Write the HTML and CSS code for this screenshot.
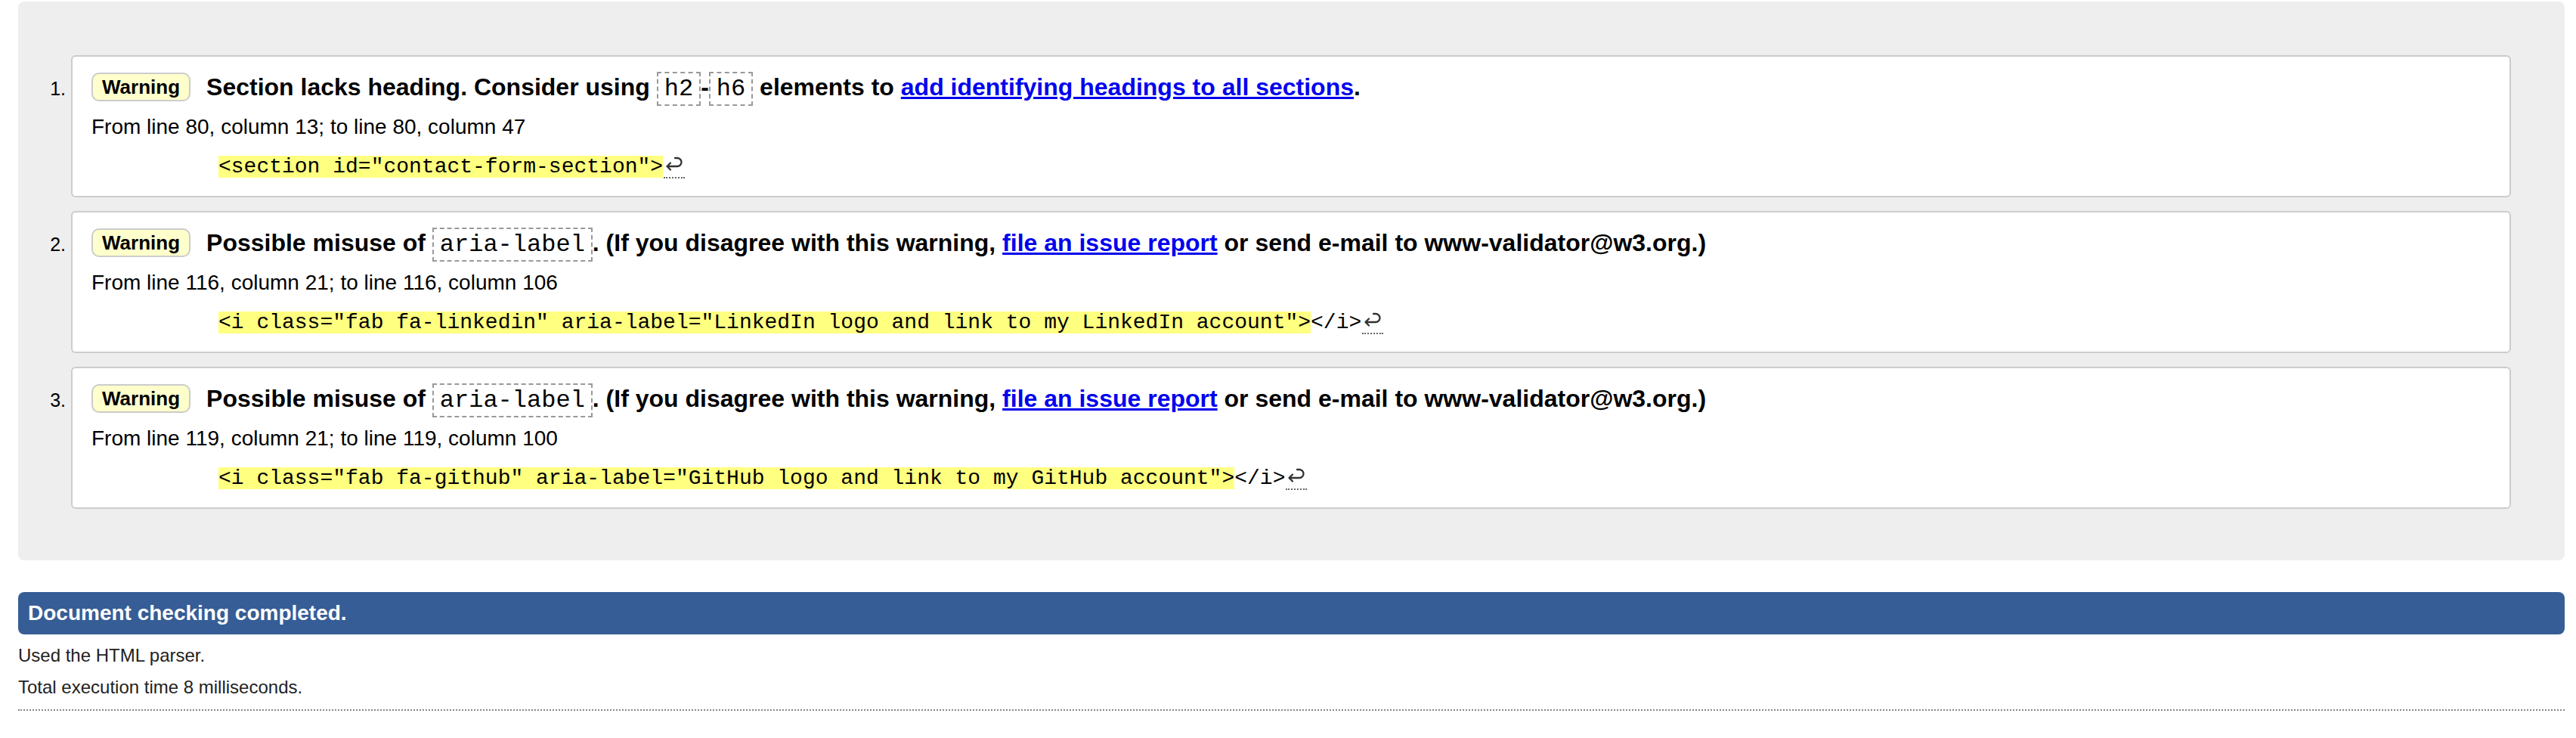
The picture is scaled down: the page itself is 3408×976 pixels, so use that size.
FILE: index.html
```html
<!DOCTYPE html>
<html lang="en">
<head>
<meta charset="utf-8">
<title>Nu Html Checker results</title>
<link rel="stylesheet" href="styles.css">
</head>
<body>
<div class="results">
  <ol class="messages">
    <li class="message">
      <p class="msg-head"><strong class="badge">Warning</strong><span>Section lacks heading. Consider using <code>h2</code>-<code>h6</code> elements to <a href="#">add identifying headings to all sections</a>.</span></p>
      <p class="location">From line 80, column 13; to line 80, column 47</p>
      <p class="extract"><b class="hl">&lt;section id="contact-form-section"&gt;</b><span class="lf" title="Line break"><svg viewBox="0 0 27 27" width="27" height="27" aria-hidden="true"><path d="M4.5 14 H18 A5.5 5.5 0 0 0 18 3 H15 M9 9.5 L4.5 14 L9 18.5"/></svg></span></p>
    </li>
    <li class="message">
      <p class="msg-head"><strong class="badge">Warning</strong><span>Possible misuse of <code>aria-label</code>. (If you disagree with this warning, <a href="#">file an issue report</a> or send e-mail to www-validator@w3.org.)</span></p>
      <p class="location">From line 116, column 21; to line 116, column 106</p>
      <p class="extract"><b class="hl">&lt;i class="fab fa-linkedin" aria-label="LinkedIn logo and link to my LinkedIn account"&gt;</b>&lt;/i&gt;<span class="lf" title="Line break"><svg viewBox="0 0 27 27" width="27" height="27" aria-hidden="true"><path d="M4.5 14 H18 A5.5 5.5 0 0 0 18 3 H15 M9 9.5 L4.5 14 L9 18.5"/></svg></span></p>
    </li>
    <li class="message">
      <p class="msg-head"><strong class="badge">Warning</strong><span>Possible misuse of <code>aria-label</code>. (If you disagree with this warning, <a href="#">file an issue report</a> or send e-mail to www-validator@w3.org.)</span></p>
      <p class="location">From line 119, column 21; to line 119, column 100</p>
      <p class="extract"><b class="hl">&lt;i class="fab fa-github" aria-label="GitHub logo and link to my GitHub account"&gt;</b>&lt;/i&gt;<span class="lf" title="Line break"><svg viewBox="0 0 27 27" width="27" height="27" aria-hidden="true"><path d="M4.5 14 H18 A5.5 5.5 0 0 0 18 3 H15 M9 9.5 L4.5 14 L9 18.5"/></svg></span></p>
    </li>
  </ol>
</div>
<p class="status">Document checking completed.</p>
<div class="stats">
  <p>Used the HTML parser.</p>
  <p>Total execution time 8 milliseconds.</p>
</div>
<div class="rule"></div>
</body>
</html>
```
FILE: styles.css
```css
* {
  box-sizing: border-box;
}

html,
body {
  margin: 0;
  padding: 0;
}

body {
  font-family: "Liberation Sans", Arial, Helvetica, sans-serif;
  color: #000;
  background: #fff;
  padding: 2px 15px 0 24px;
}

.results {
  background: #eeeeee;
  border-radius: 8px;
  padding: 71px 71px 68px 0;
}

.messages {
  list-style: decimal;
  margin: 0;
  padding: 0 0 0 70px;
}

.message {
  background: #fff;
  border: 2px solid #cccccc;
  border-radius: 6px;
  padding: 21px 24px 24px 25px;
  margin: 0 0 18px;
}

.message:last-child {
  margin-bottom: 0;
}

.message::marker {
  font-family: "Liberation Sans", Arial, sans-serif;
  font-size: 25px;
  color: #000;
}

.msg-head {
  margin: 0;
  height: 38px;
  font-size: 32px;
  font-weight: bold;
  line-height: 38px;
  white-space: nowrap;
}

.badge {
  display: inline-block;
  vertical-align: top;
  height: 38px;
  line-height: 34px;
  font-size: 26px;
  font-weight: bold;
  padding: 0 12px;
  border: 2px solid #cccccc;
  border-radius: 10px;
  background: #ffffcc;
  margin-right: 21px;
}

.msg-head code {
  font-family: "Liberation Mono", "Courier New", monospace;
  font-weight: normal;
  font-size: 32px;
  line-height: 20px;
  border: 2px dashed #999999;
  padding: 2px 8px;
}

.msg-head a {
  color: #0000ee;
  text-decoration: underline;
}

.location {
  margin: 18px 0 0;
  height: 32px;
  font-size: 28px;
  line-height: 32px;
}

.extract {
  margin: 22px 0 0 168px;
  height: 29px;
  font-family: "Liberation Mono", "Courier New", monospace;
  font-size: 28px;
  line-height: 29px;
  white-space: pre;
}

.hl {
  display: inline-block;
  vertical-align: top;
  height: 29px;
  font-weight: normal;
  background: #ffff80;
}

.lf {
  display: inline-block;
  vertical-align: top;
  width: 28px;
  height: 30px;
  margin-left: 1px;
  border-bottom: 2px dotted #666;
}

.lf svg {
  display: block;
  fill: none;
  stroke: #333;
  stroke-width: 2.3;
  stroke-linecap: round;
  stroke-linejoin: round;
}

.status {
  margin: 42px 0 0;
  background: #365d95;
  color: #fff;
  border-radius: 8px;
  font-size: 28px;
  font-weight: bold;
  line-height: 56px;
  padding: 0 13px;
}

.stats p {
  margin: 14px 0;
  font-size: 24px;
  line-height: 28px;
  color: #222;
}

.rule {
  border-top: 2px dotted #888;
  margin-top: 15px;
}
```
